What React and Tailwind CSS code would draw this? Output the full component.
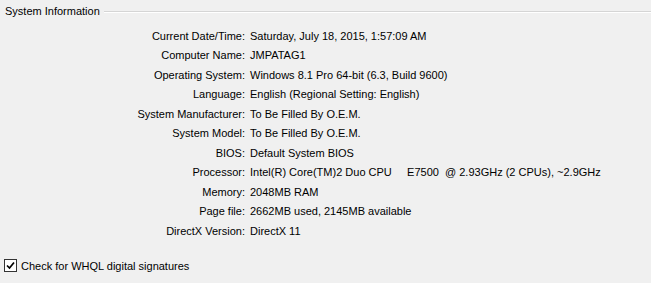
const rows = [
  ["Current Date/Time:", "Saturday, July 18, 2015, 1:57:09 AM"],
  ["Computer Name:", "JMPATAG1"],
  ["Operating System:", "Windows 8.1 Pro 64-bit (6.3, Build 9600)"],
  ["Language:", "English (Regional Setting: English)"],
  ["System Manufacturer:", "To Be Filled By O.E.M."],
  ["System Model:", "To Be Filled By O.E.M."],
  ["BIOS:", "Default System BIOS"],
  ["Processor:", "Intel(R) Core(TM)2 Duo CPU     E7500  @ 2.93GHz (2 CPUs), ~2.9GHz"],
  ["Memory:", "2048MB RAM"],
  ["Page file:", "2662MB used, 2145MB available"],
  ["DirectX Version:", "DirectX 11"],
]

export default function App() {
  return (
    <div
      className="w-[651px] h-[283px] bg-[#f0f0f0] text-[11px] text-black overflow-hidden"
      style={{ fontFamily: "Tahoma, 'Liberation Sans', sans-serif" }}
    >
      {/* group box header */}
      <div className="flex items-center h-[22px] pl-[5px]">
        <span className="leading-none">System Information</span>
        <div className="flex-1 ml-[4px] mt-[1px] border-t border-[#d5d5d5] border-b border-b-white" />
      </div>

      <div className="pt-[4px]">
        {rows.map(([label, value]) => (
          <div key={label} className="flex items-center h-[19.5px]">
            <span className="w-[246px] text-right pr-[1px] whitespace-pre">{label}</span>
            <span className="pl-[4px] whitespace-pre">{value}</span>
          </div>
        ))}
      </div>

      <label className="flex items-center gap-[4px] pl-[4px] mt-[17px]">
        <span className="w-[13px] h-[13px] border border-[#333] bg-white flex items-center justify-center">
          <svg width="9" height="9" viewBox="0 0 9 9">
            <path d="M1 4.5 L3.5 7 L8 1.5" fill="none" stroke="#000" strokeWidth="1.7" />
          </svg>
        </span>
        <span>Check for WHQL digital signatures</span>
      </label>
    </div>
  )
}
